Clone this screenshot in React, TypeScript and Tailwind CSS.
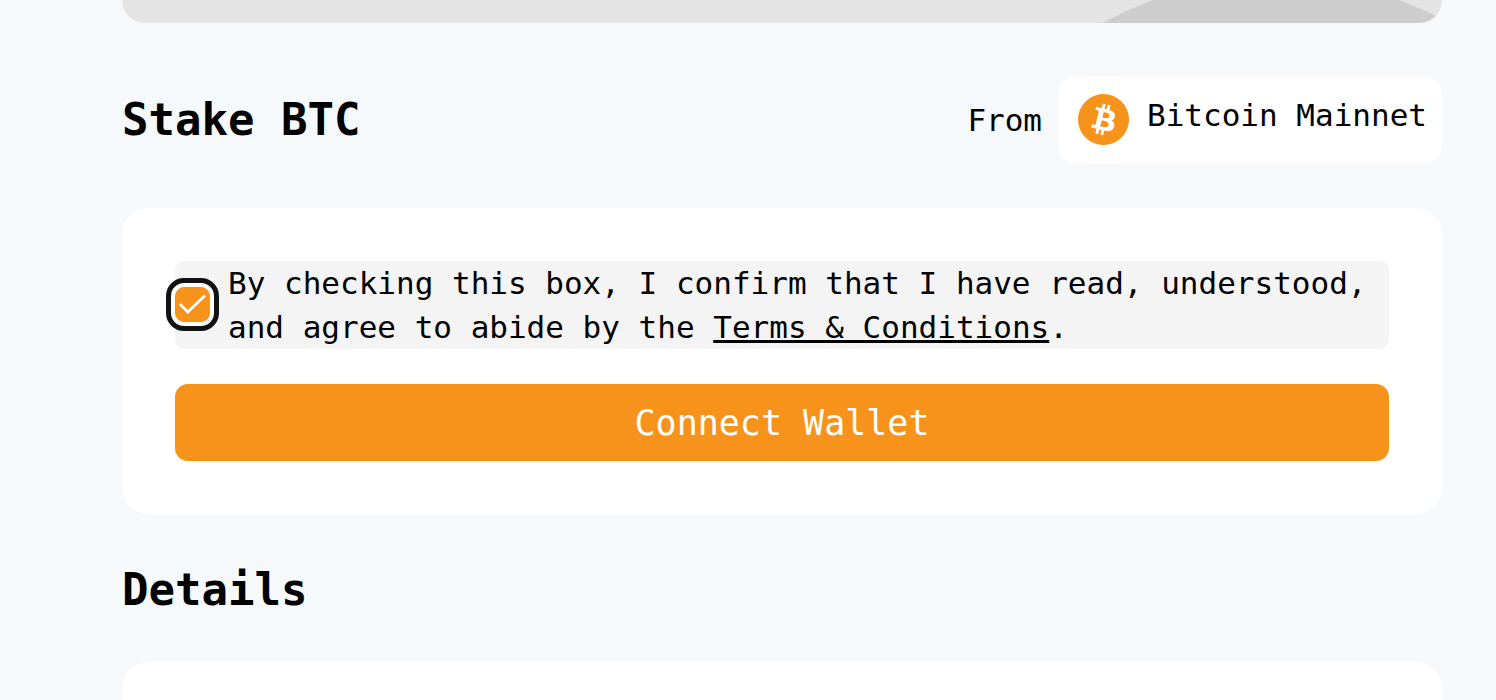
import { useState } from "react";

function BitcoinIcon() {
  return (
    <svg viewBox="0 0 32 32" className="size-[51px] shrink-0" aria-hidden="true">
      <circle cx="16" cy="16" r="16" fill="#f7931a" />
      <path
        fill="#fff"
        fillRule="evenodd"
        d="M23.189 14.02c.314-2.096-1.283-3.223-3.465-3.975l.708-2.84-1.728-.43-.69 2.765c-.454-.114-.92-.22-1.385-.326l.695-2.783L15.596 6l-.708 2.839c-.376-.086-.746-.17-1.104-.26l.002-.009-2.384-.595-.46 1.846s1.283.294 1.256.312c.7.175.826.638.805 1.006l-.806 3.235c.048.012.11.03.18.057l-.183-.045-1.13 4.532c-.086.212-.303.531-.793.41.018.025-1.256-.313-1.256-.313l-.858 1.978 2.25.561c.418.105.828.215 1.231.318l-.715 2.872 1.727.43.708-2.84c.472.127.93.245 1.378.357l-.706 2.828 1.728.43.715-2.866c2.948.558 5.164.333 6.097-2.333.752-2.146-.037-3.385-1.588-4.192 1.13-.26 1.98-1.003 2.207-2.538zm-3.95 5.538c-.533 2.147-4.148.986-5.32.695l.95-3.805c1.172.293 4.929.872 4.37 3.11zm.535-5.569c-.487 1.953-3.495.96-4.47.717l.86-3.45c.975.243 4.118.696 3.61 2.733z"
      />
    </svg>
  );
}

export default function App() {
  const [agreed, setAgreed] = useState(true);

  return (
    <div className="flex min-h-screen flex-col bg-[#f5f9fc] pr-[54px] pl-[122px] font-['DejaVu_Sans_Mono','Liberation_Mono',monospace] text-black">
      <div className="flex h-[23px] justify-end overflow-hidden rounded-b-[26px] bg-[#e4e4e4]">
        <svg viewBox="0 0 380 23" className="h-[23px] w-[380px]" aria-hidden="true">
          <circle cx="214" cy="333" r="355" fill="#cdcdcd" />
        </svg>
      </div>

      <header className="mt-[53px] flex items-center justify-between">
        <h1 className="text-[44px] leading-[60px] font-bold">Stake BTC</h1>
        <div className="flex items-center gap-4 text-[31px] leading-[44px]">
          <span>From</span>
          <div className="flex h-[88px] items-center gap-[18px] rounded-[18px] bg-white pr-[15px] pb-[2px] pl-5">
            <BitcoinIcon />
            <span className="pb-2">Bitcoin Mainnet</span>
          </div>
        </div>
      </header>

      <main className="mt-11 rounded-[26px] bg-white p-[53px]">
        <div className="flex items-start gap-[18px] rounded-[9px] bg-[#f4f4f4]">
          <span className="mt-[26px] grid size-[35px] shrink-0">
            <input
              id="terms"
              type="checkbox"
              checked={agreed}
              onChange={(event) => setAgreed(event.target.checked)}
              className="col-start-1 row-start-1 size-[35px] appearance-none rounded-[9px] border border-[#f7931a] bg-white ring-4 ring-white outline-[5px] outline-offset-4 outline-[#101214] checked:bg-[#f7931a]"
            />
            {agreed && (
              <svg
                viewBox="0 0 35 35"
                fill="none"
                stroke="#fff"
                strokeWidth="2.8"
                className="pointer-events-none col-start-1 row-start-1 size-[35px]"
                aria-hidden="true"
              >
                <path d="M5 17 12.8 25 30 8.5" />
              </svg>
            )}
          </span>
          <label htmlFor="terms" className="text-[31px] leading-[44px]">
            By checking this box, I confirm that I have read, understood, and agree to abide by the{" "}
            <a href="#terms" className="underline decoration-[3px] underline-offset-2">
              Terms &amp; Conditions
            </a>
            .
          </label>
        </div>
        <button
          type="button"
          className="mt-[35px] h-[77px] w-full rounded-[13px] bg-[#f7931a] text-[35px] leading-[50px] text-white"
        >
          Connect Wallet
        </button>
      </main>

      <h2 className="mt-[46px] text-[44px] leading-[60px] font-bold">Details</h2>
      <section aria-label="Details" className="mt-[42px] min-h-[38px] flex-1 rounded-t-[26px] bg-white" />
    </div>
  );
}
